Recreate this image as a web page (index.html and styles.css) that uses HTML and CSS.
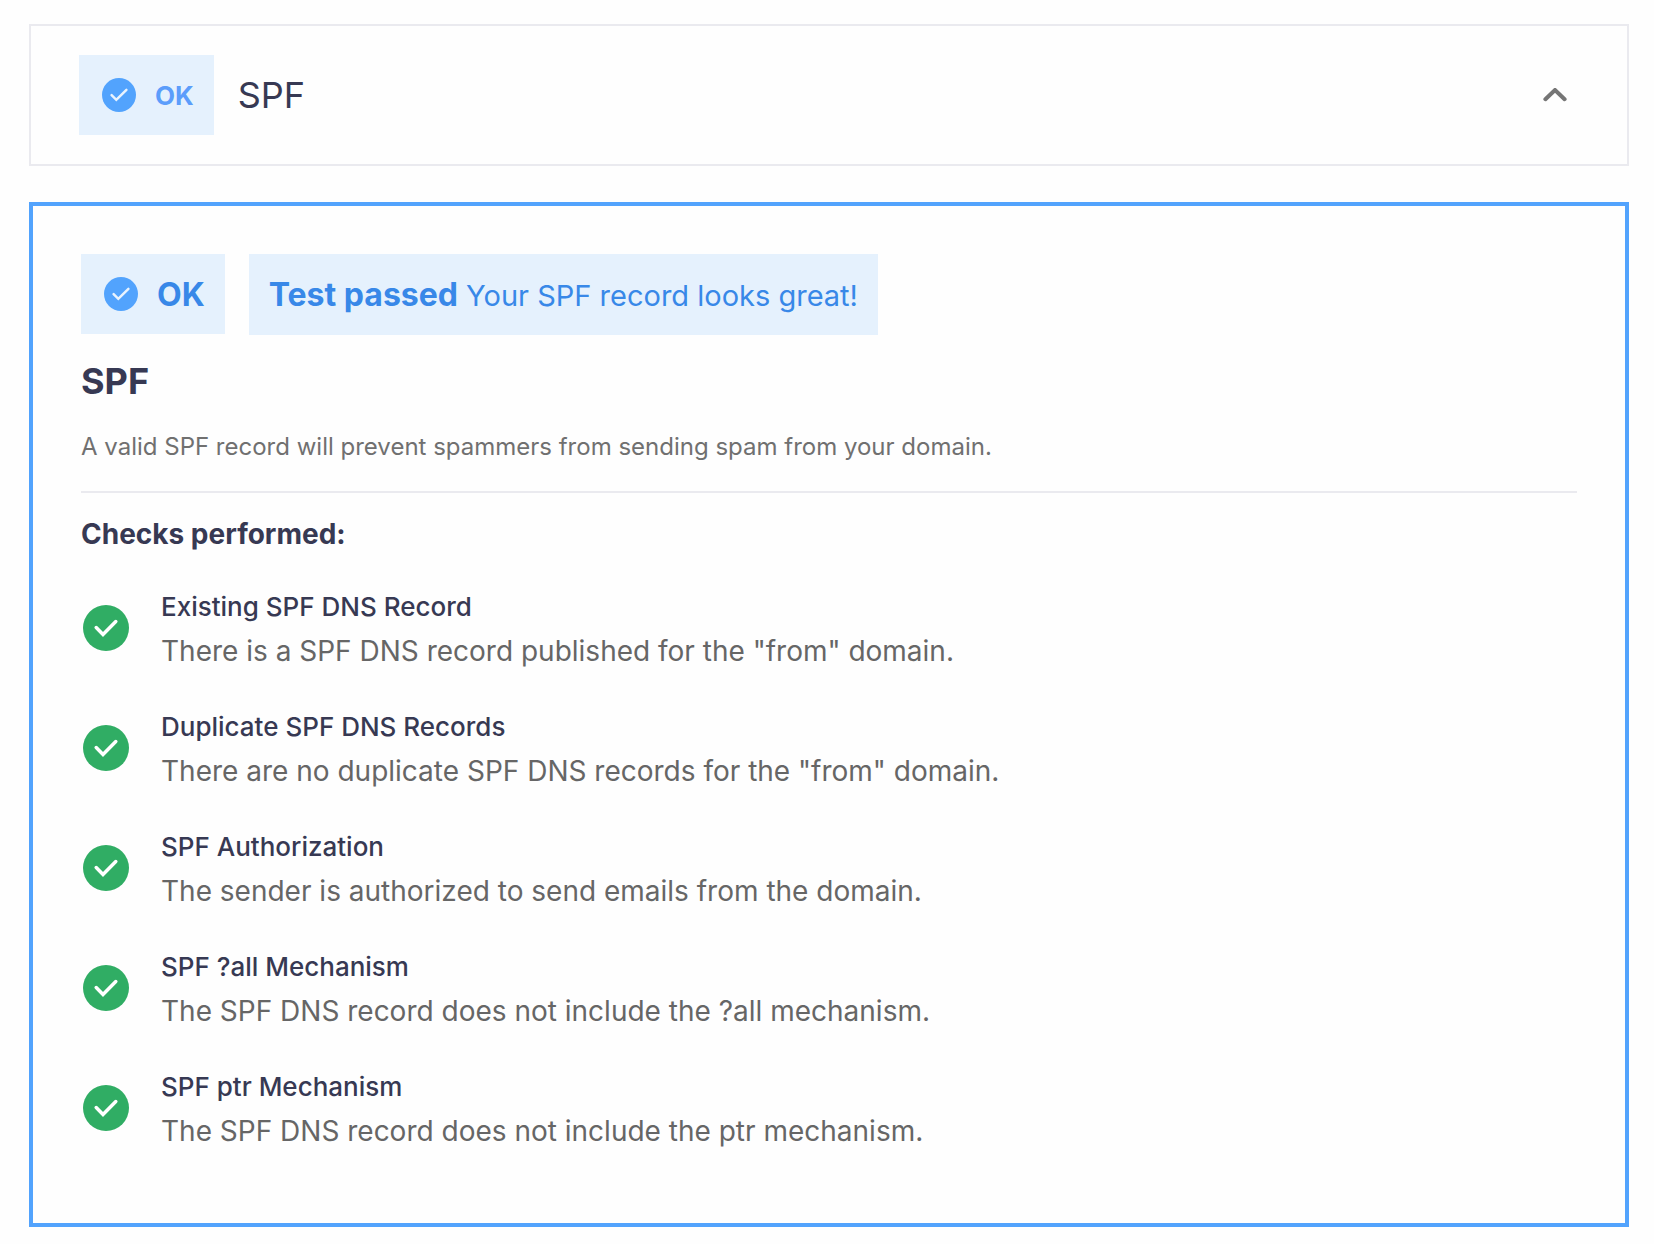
FILE: index.html
```html
<!DOCTYPE html>
<html lang="en">
<head>
<meta charset="utf-8">
<meta name="viewport" content="width=device-width, initial-scale=1">
<title>SPF</title>
<link rel="stylesheet" href="styles.css">
</head>
<body>
<svg class="symbols" aria-hidden="true">
  <symbol id="badge-check" viewBox="0 0 34 34">
    <circle cx="17" cy="17" r="17" fill="#52a3fd"/>
    <path d="M9.6 17.2l4.7 4.6L24.4 11.8" fill="none" stroke="#e9f3fe" stroke-width="2.5" stroke-linecap="round"/>
  </symbol>
  <symbol id="item-check" viewBox="0 0 50 50">
    <circle cx="25" cy="24" r="23" fill="#30ad64"/>
    <path d="M15.2 23.6l6.8 6.9L34.8 17.6" fill="none" stroke="#fff" stroke-width="3.5" stroke-linecap="round"/>
  </symbol>
</svg>
<main class="page">
  <button class="toggle" type="button" aria-expanded="true" aria-controls="spf-panel">
    <span class="badge">
      <svg class="badge-icon" aria-hidden="true"><use href="#badge-check"/></svg>
      <span class="badge-label">OK</span>
    </span>
    <span class="toggle-title">SPF</span>
    <svg class="chevron" viewBox="0 0 24 14" aria-hidden="true"><path d="M2.4 11.2L12 2L21.6 11.2" fill="none" stroke="#757575" stroke-width="4" stroke-linecap="round"/></svg>
  </button>
  <section class="panel" id="spf-panel">
    <div class="summary">
      <span class="badge badge-large">
        <svg class="badge-icon" aria-hidden="true"><use href="#badge-check"/></svg>
        <span class="badge-label">OK</span>
      </span>
      <p class="result"><strong>Test passed</strong> Your SPF record looks great!</p>
    </div>
    <h2 class="title">SPF</h2>
    <p class="intro">A valid SPF record will prevent spammers from sending spam from your domain.</p>
    <hr class="rule">
    <h3 class="subtitle">Checks performed:</h3>
    <ul class="checks">
      <li class="check">
        <svg class="check-icon" aria-hidden="true"><use href="#item-check"/></svg>
        <div><h4 class="check-title">Existing SPF DNS Record</h4><p class="check-text">There is a SPF DNS record published for the "from" domain.</p></div>
      </li>
      <li class="check">
        <svg class="check-icon" aria-hidden="true"><use href="#item-check"/></svg>
        <div><h4 class="check-title">Duplicate SPF DNS Records</h4><p class="check-text">There are no duplicate SPF DNS records for the "from" domain.</p></div>
      </li>
      <li class="check">
        <svg class="check-icon" aria-hidden="true"><use href="#item-check"/></svg>
        <div><h4 class="check-title">SPF Authorization</h4><p class="check-text">The sender is authorized to send emails from the domain.</p></div>
      </li>
      <li class="check">
        <svg class="check-icon" aria-hidden="true"><use href="#item-check"/></svg>
        <div><h4 class="check-title">SPF ?all Mechanism</h4><p class="check-text">The SPF DNS record does not include the ?all mechanism.</p></div>
      </li>
      <li class="check">
        <svg class="check-icon" aria-hidden="true"><use href="#item-check"/></svg>
        <div><h4 class="check-title">SPF ptr Mechanism</h4><p class="check-text">The SPF DNS record does not include the ptr mechanism.</p></div>
      </li>
    </ul>
  </section>
</main>
</body>
</html>
```
FILE: styles.css
```css
* { box-sizing: border-box; }
body, h2, h3, h4, p, ul { margin: 0; padding: 0; }
body {
  background: #fefefe;
  color: #373953;
  font-family: Inter, "Liberation Sans", sans-serif;
}
.symbols { display: none; }
.page {
  display: flex;
  flex-direction: column;
  gap: 36px;
  padding: 24px 25px 16px 29px;
}
.toggle {
  display: flex;
  align-items: center;
  gap: 24px;
  width: 100%;
  padding: 29px 60px 29px 48px;
  border: 2px solid #eaeaef;
  background: #fefefe;
  color: inherit;
  font: inherit;
  text-align: left;
  cursor: pointer;
}
.toggle-title {
  flex: 1;
  font-size: 36px;
  line-height: 44px;
}
.chevron { width: 24px; height: 14px; }
.badge {
  display: flex;
  align-items: center;
  gap: 19px;
  height: 80px;
  padding: 0 20px 0 23px;
  background: #e5f1fd;
}
.badge-icon { width: 34px; height: 34px; }
.badge-label {
  color: #5b9dfb;
  font-size: 26px;
  font-weight: 700;
}
.badge-large .badge-label {
  color: #3888e8;
  font-size: 32px;
}
.panel {
  padding: 48px 48px 70px;
  border: 4px solid #52a3fd;
}
.summary {
  display: flex;
  align-items: flex-start;
  gap: 24px;
}
.result {
  padding: 21px 20px 19px;
  background: #e5f1fd;
  color: #3888e8;
  font-size: 29px;
  font-weight: 400;
  line-height: 41px;
}
.result strong {
  font-size: 32px;
  font-weight: 700;
  line-height: 32px;
}
.title {
  margin-top: 24px;
  font-size: 36px;
  font-weight: 700;
  line-height: 44px;
}
.intro {
  margin-top: 26px;
  color: #707070;
  font-size: 24px;
  line-height: 36px;
}
.rule {
  height: 2px;
  margin: 26px 0 24px;
  border: 0;
  background: #eaeaef;
}
.subtitle {
  font-size: 28px;
  font-weight: 700;
  line-height: 34px;
}
.checks {
  display: grid;
  gap: 32px;
  margin-top: 34px;
  list-style: none;
}
.check {
  display: flex;
  align-items: center;
  gap: 30px;
}
.check-icon { width: 50px; height: 50px; flex: none; }
.check-title {
  font-size: 26px;
  font-weight: 500;
  line-height: 44px;
}
.check-text {
  color: #666;
  font-size: 28px;
  line-height: 44px;
}
```
